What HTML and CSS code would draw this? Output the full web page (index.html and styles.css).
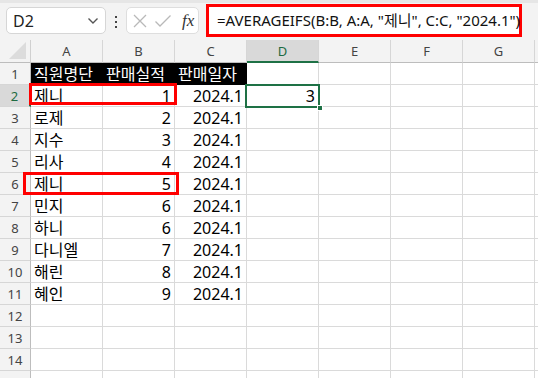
FILE: index.html
```html
<!DOCTYPE html>
<html lang="ko">
<head>
<meta charset="utf-8">
<title>Excel</title>
<link rel="stylesheet" href="styles.css">
</head>
<body>
<div class="app">
  <div class="toolbar">
    <div class="namebox">
      <span class="ref">D2</span>
      <svg class="chev" width="12" height="8" viewBox="0 0 12 8"><path d="M1.5 1.5 L6 6 L10.5 1.5" fill="none" stroke="#555" stroke-width="1.4"/></svg>
    </div>
    <div class="dots"><i></i><i></i><i></i></div>
    <div class="fbtns">
      <svg width="16" height="16" viewBox="0 0 16 16"><path d="M2 2 L14 14 M14 2 L2 14" stroke="#b9b9b9" stroke-width="1.3" fill="none"/></svg>
      <svg width="18" height="14" viewBox="0 0 18 14"><path d="M1.5 7.5 L6 12 L16.5 1.5" stroke="#b9b9b9" stroke-width="1.3" fill="none"/></svg>
      <span class="fx">fx</span>
    </div>
    <div class="formula">=AVERAGEIFS(B:B, A:A, "제니", C:C, "2024.1")</div>
  </div>
  <div class="sheet">
    <div class="grid">
      <div class="corner"><svg width="18" height="17" viewBox="0 0 18 17"><path d="M17 0 L17 17 L0 17 Z" fill="#dcdcdc"/></svg></div>
      <div class="ch">A</div><div class="ch">B</div><div class="ch">C</div><div class="ch sel">D</div><div class="ch">E</div><div class="ch">F</div><div class="ch">G</div><div class="ch"></div>

      <div class="rh">1</div><div class="c blk">직원명단</div><div class="c blk">판매실적</div><div class="c blk">판매일자</div><div class="c"></div><div class="c"></div><div class="c"></div><div class="c"></div><div class="c"></div>
      <div class="rh sel">2</div><div class="c">제니</div><div class="c n">1</div><div class="c n">2024.1</div><div class="c n">3</div><div class="c"></div><div class="c"></div><div class="c"></div><div class="c"></div>
      <div class="rh">3</div><div class="c">로제</div><div class="c n">2</div><div class="c n">2024.1</div><div class="c"></div><div class="c"></div><div class="c"></div><div class="c"></div><div class="c"></div>
      <div class="rh">4</div><div class="c">지수</div><div class="c n">3</div><div class="c n">2024.1</div><div class="c"></div><div class="c"></div><div class="c"></div><div class="c"></div><div class="c"></div>
      <div class="rh">5</div><div class="c">리사</div><div class="c n">4</div><div class="c n">2024.1</div><div class="c"></div><div class="c"></div><div class="c"></div><div class="c"></div><div class="c"></div>
      <div class="rh">6</div><div class="c">제니</div><div class="c n">5</div><div class="c n">2024.1</div><div class="c"></div><div class="c"></div><div class="c"></div><div class="c"></div><div class="c"></div>
      <div class="rh">7</div><div class="c">민지</div><div class="c n">6</div><div class="c n">2024.1</div><div class="c"></div><div class="c"></div><div class="c"></div><div class="c"></div><div class="c"></div>
      <div class="rh">8</div><div class="c">하니</div><div class="c n">6</div><div class="c n">2024.1</div><div class="c"></div><div class="c"></div><div class="c"></div><div class="c"></div><div class="c"></div>
      <div class="rh">9</div><div class="c">다니엘</div><div class="c n">7</div><div class="c n">2024.1</div><div class="c"></div><div class="c"></div><div class="c"></div><div class="c"></div><div class="c"></div>
      <div class="rh">10</div><div class="c">해린</div><div class="c n">8</div><div class="c n">2024.1</div><div class="c"></div><div class="c"></div><div class="c"></div><div class="c"></div><div class="c"></div>
      <div class="rh">11</div><div class="c">혜인</div><div class="c n">9</div><div class="c n">2024.1</div><div class="c"></div><div class="c"></div><div class="c"></div><div class="c"></div><div class="c"></div>
      <div class="rh">12</div><div class="c"></div><div class="c"></div><div class="c"></div><div class="c"></div><div class="c"></div><div class="c"></div><div class="c"></div><div class="c"></div>
      <div class="rh">13</div><div class="c"></div><div class="c"></div><div class="c"></div><div class="c"></div><div class="c"></div><div class="c"></div><div class="c"></div><div class="c"></div>
      <div class="rh">14</div><div class="c"></div><div class="c"></div><div class="c"></div><div class="c"></div><div class="c"></div><div class="c"></div><div class="c"></div><div class="c"></div>
      <div class="rh"></div><div class="c"></div><div class="c"></div><div class="c"></div><div class="c"></div><div class="c"></div><div class="c"></div><div class="c"></div><div class="c"></div>
    </div>
    <div class="selbox"><span class="handle"></span></div>
    <div class="redbox r2"></div>
    <div class="redbox r6"></div>
  </div>
</div>
</body>
</html>
```

FILE: styles.css
```css
* { box-sizing: border-box; }
html, body { margin: 0; padding: 0; }
body {
  width: 538px;
  height: 378px;
  overflow: hidden;
  background: #fff;
  font-family: "Noto Sans", "Noto Sans CJK KR", sans-serif;
  color: #000;
}
.app { width: 538px; height: 378px; overflow: hidden; }

.toolbar {
  height: 40px;
  background: #f3f3f3;
  border-top: 3px solid #e6e6e6;
  display: flex;
  align-items: flex-start;
  padding-left: 6px;
}
.namebox {
  margin-top: 4px;
  width: 100px;
  height: 27px;
  background: #fff;
  border: 1px solid #d6d6d6;
  border-radius: 5px;
  display: flex;
  align-items: center;
  justify-content: space-between;
  padding: 0 6px 0 6px;
}
.namebox .ref { font-size: 16px; color: #222; }
.namebox .chev { margin-top: 1px; }

.dots {
  margin-top: 13px;
  margin-left: 9px;
  width: 3px;
  display: flex;
  flex-direction: column;
  gap: 3px;
}
.dots i { display: block; width: 2px; height: 2px; background: #444; }

.fbtns {
  margin-top: 4px;
  margin-left: 8px;
  width: 73px;
  height: 27px;
  background: #fff;
  border: 1px solid #dedede;
  border-radius: 5px;
  display: flex;
  align-items: center;
  padding-left: 5px;
  gap: 6px;
}
.fx {
  font-family: "Liberation Serif", serif;
  font-style: italic;
  font-size: 17px;
  color: #333;
  margin-left: 4px;
}

.formula {
  margin-top: 1px;
  margin-left: 7px;
  width: 316px;
  height: 33px;
  background: #fff;
  border: 3px solid #ff0000;
  font-size: 15px;
  line-height: 27px;
  padding-left: 8px;
  color: #111;
  white-space: nowrap;
}

.sheet { position: relative; }
.grid {
  display: grid;
  grid-template-columns: 31px repeat(7, 72px) 40px;
  grid-template-rows: 23px repeat(15, 22px);
}
.corner {
  background: #f3f3f3;
  border-right: 1px solid #d0d0d0;
  border-bottom: 1px solid #bdbdbd;
  display: flex;
  align-items: flex-end;
  justify-content: flex-end;
  padding: 0 3px 3px 0;
}
.ch {
  background: #f3f3f3;
  border-right: 1px solid #d6d6d6;
  border-bottom: 1px solid #bdbdbd;
  text-align: center;
  font-size: 13px;
  line-height: 22px;
  color: #444;
}
.ch.sel {
  background: #d9d9d9;
  color: #1e6b41;
  border-bottom: 2px solid #1e7145;
}
.rh {
  background: #f3f3f3;
  border-right: 1px solid #bdbdbd;
  border-bottom: 1px solid #d6d6d6;
  text-align: center;
  font-size: 13px;
  line-height: 22px;
  color: #444;
}
.rh.sel {
  background: #d9d9d9;
  color: #1e6b41;
  border-right: 2px solid #1e7145;
}
.c {
  border-right: 1px solid #dadada;
  border-bottom: 1px solid #dadada;
  font-size: 16px;
  line-height: 22px;
  padding: 0 3px 0 3px;
  white-space: nowrap;
  overflow: hidden;
}
.c.n { text-align: right; }
.c.blk {
  background: #000;
  color: #fff;
  border-color: #000;
}

.selbox {
  position: absolute;
  left: 245px;
  top: 44px;
  width: 75px;
  height: 24px;
  border: 2px solid #1e7145;
}
.handle {
  position: absolute;
  right: -5px;
  bottom: -5px;
  width: 6px;
  height: 6px;
  background: #1e7145;
  border: 1px solid #fff;
}
.redbox {
  position: absolute;
  border: 3px solid #ff0000;
}
.redbox.r2 { left: 29px; top: 43px; width: 148px; height: 22px; }
.redbox.r6 { left: 23px; top: 132px; width: 156px; height: 23px; }
```
